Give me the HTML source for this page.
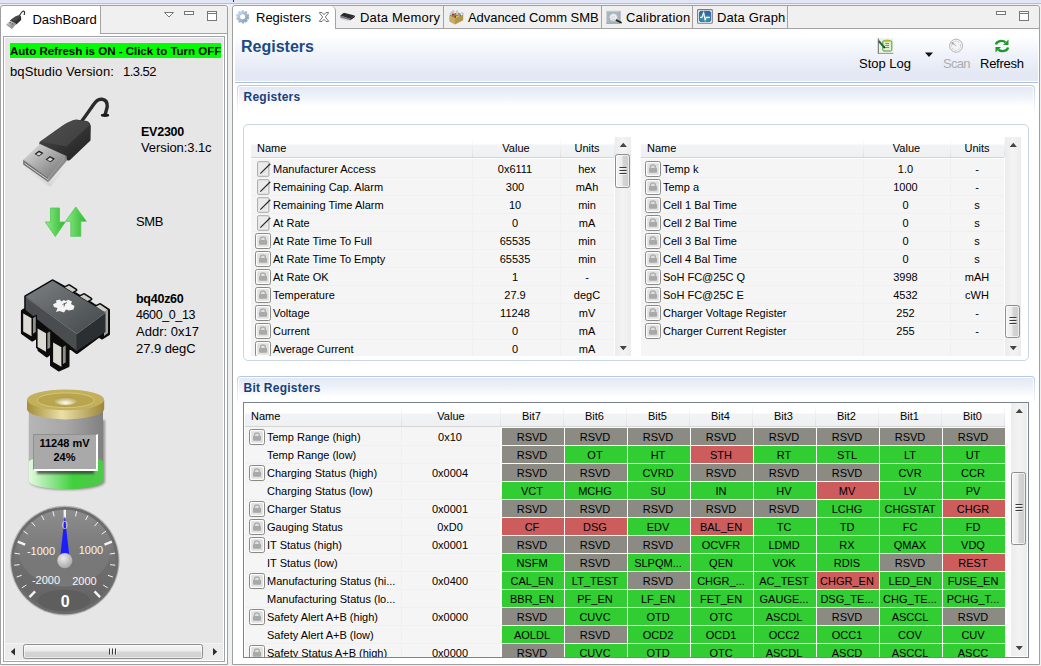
<!DOCTYPE html>
<html><head><meta charset="utf-8"><title>bqStudio</title><style>
*{box-sizing:border-box;margin:0;padding:0}
html,body{width:1041px;height:666px;overflow:hidden}
body{position:relative;background:#f0f0f0;font-family:"Liberation Sans",sans-serif;font-size:12px;color:#000}
.abs{position:absolute}
.t13{font-size:13px;white-space:nowrap}
.t12{font-size:11px;white-space:nowrap}
.cell{position:absolute;height:17px;width:62px;padding-right:2px;text-align:center;font-size:11px;line-height:18px;white-space:nowrap;overflow:hidden}
.row{position:absolute;white-space:nowrap;font-size:11px;line-height:18px;height:18px}
.ctr{position:absolute;text-align:center;white-space:nowrap;font-size:11px;line-height:18px;height:18px}
.lock{position:absolute;width:16px;height:16px}
</style></head><body>
<div class="abs" style="left:0;top:0;width:1041px;height:4px;background:linear-gradient(#dfe4f5 0,#e3e7f7 2.500px,#e3e7f7 3px,#b6bcd5 3px)"></div>
<div class="abs" style="left:0;top:664px;width:1041px;height:2px;background:#f0f0f0"></div>
<div class="abs" style="left:233px;top:0;width:1px;height:2px;background:#333"></div>
<div class="abs" style="left:0;top:5px;width:228px;height:660px;border:1px solid #a0a0a0;border-radius:3px 3px 0 0;background:#fff"></div>
<div class="abs" style="left:100px;top:6px;width:127px;height:28px;background:#f0f0f0;border-bottom:1px solid #a3a3a3;border-left:1px solid #a3a3a3;border-radius:0 4px 0 0"></div>
<div class="abs t13" style="left:32.500px;top:12px;line-height:16px;letter-spacing:-0.100px">DashBoard</div>
<svg class="abs" style="left:160px;top:8px" width="64" height="16" viewBox="0 0 64 16"><path d="M4.500 4.500h9l-4.500 4.500z" fill="#fff" stroke="#777"/><rect x="24.500" y="3.500" width="9" height="3" fill="#fff" stroke="#777"/><rect x="47.500" y="3.500" width="9" height="9" fill="#fff" stroke="#777"/><path d="M47.500 5.500h9" stroke="#777"/></svg>
<div class="abs" style="left:3px;top:36px;width:222px;height:626px;border:1px solid #a0a4ad;background:#fff"></div>
<div class="abs" style="left:5px;top:38px;width:218px;height:622px;background:#e6e6e6"></div>
<div class="abs" style="left:9px;top:42px;width:212px;height:16px;background:#f3e4f3"></div>
<div class="abs" style="left:10px;top:43px;width:211px;height:15px;background:#00ff00"></div>
<div class="abs" style="left:10px;top:43px;width:211px;height:15px;line-height:16px;font-size:11.5px;font-weight:bold;white-space:nowrap">Auto Refresh is ON - Click to Turn OFF</div>
<div class="abs" style="left:10px;top:64px;font-size:13px;line-height:16px;white-space:nowrap;letter-spacing:0.123px">bqStudio Version:</div>
<div class="abs" style="left:123px;top:64px;font-size:13px;line-height:16px;white-space:nowrap;letter-spacing:-0.524px">1.3.52</div>
<svg class="abs" style="left:0;top:0" width="228" height="640" viewBox="0 0 228 640"><defs>
<linearGradient id="ug" x1="0" y1="0" x2="1" y2="1"><stop offset="0" stop-color="#4e4e4e"/><stop offset="1" stop-color="#1e1e1e"/></linearGradient>
<linearGradient id="um" x1="0" y1="0" x2="1" y2="1"><stop offset="0" stop-color="#e4e4e4"/><stop offset="0.6" stop-color="#9c9c9c"/><stop offset="1" stop-color="#6e6e6e"/></linearGradient>
<linearGradient id="ag" x1="0" y1="0" x2="1" y2="0"><stop offset="0" stop-color="#8fea8a"/><stop offset="1" stop-color="#2cb82c"/></linearGradient>
<linearGradient id="cg" x1="0" y1="0" x2="1" y2="1"><stop offset="0" stop-color="#7c8083"/><stop offset="1" stop-color="#42474a"/></linearGradient>
<linearGradient id="bb" x1="0" y1="0" x2="1" y2="0"><stop offset="0" stop-color="#b6b6b6"/><stop offset="0.5" stop-color="#a7a7a7"/><stop offset="1" stop-color="#808080"/></linearGradient>
<linearGradient id="bg" x1="0" y1="0" x2="1" y2="0"><stop offset="0" stop-color="#e2fbe0"/><stop offset="0.6" stop-color="#40d03c"/><stop offset="1" stop-color="#50c84c"/></linearGradient>
<linearGradient id="bt" x1="0" y1="0" x2="1" y2="0"><stop offset="0" stop-color="#a48c38"/><stop offset="0.45" stop-color="#ece0a8"/><stop offset="1" stop-color="#9c863a"/></linearGradient>
<radialGradient id="bn" cx="0.5" cy="0.75" r="0.6"><stop offset="0" stop-color="#fffff4"/><stop offset="1" stop-color="#b4a04c"/></radialGradient>
<filter id="sh" x="-10%" y="-10%" width="130%" height="130%"><feGaussianBlur stdDeviation="1.2"/></filter>
<linearGradient id="gf" x1="0" y1="0" x2="0" y2="1"><stop offset="0" stop-color="#8e8e8e"/><stop offset="0.550" stop-color="#6e6e6e"/><stop offset="1" stop-color="#626262"/></linearGradient><linearGradient id="gh" x1="0" y1="0" x2="0" y2="1"><stop offset="0" stop-color="#8c8c8c" stop-opacity="0"/><stop offset="0.600" stop-color="#7c7c7c" stop-opacity="0.600"/><stop offset="1" stop-color="#7a7a7a" stop-opacity="0.900"/></linearGradient><radialGradient id="gk" cx="0.4" cy="0.35" r="0.7"><stop offset="0" stop-color="#ececec"/><stop offset="1" stop-color="#a4a4a4"/></radialGradient>
</defs><path d="M24 166L50 184L70 160L62 170L50 186Z" fill="#555" opacity="0.250" filter="url(#sh)"/><g transform="translate(10 90)"><path d="M71 32C75 27 79 21 82.500 16S88 8.800 92 9.300S97.500 12.500 97.200 17L95.300 24" fill="none" stroke="#2a2a2a" stroke-width="3.400" stroke-linecap="round"/><ellipse cx="95" cy="25.200" rx="4.200" ry="1.700" fill="#1a1a1a"/><path d="M29.500 52L52 36Q60 30.500 66 29.500L77 31Q81 32.500 80.800 38L80.500 50.500L60 70Q57.500 71.500 55.500 69L30.500 56.500Q28.500 54.500 29.500 52Z" fill="url(#ug)"/><path d="M30 51.500L52 36Q60 30.500 66 30L77 31.500Q80 32.500 79 35.500L56.500 56.500Z" fill="#505050" opacity="0.600"/><path d="M13.200 69.700L30 54L56.500 66L38.500 87.700Z" fill="url(#um)"/><path d="M13.200 69.700L38.500 87.700V92.300L13.200 74.500Z" fill="#707070"/><path d="M38.500 87.700L56.500 66L57 70.500L38.500 92.300Z" fill="#8c8c8c"/><path d="M14.500 73.200L38 89.800" stroke="#e0e0e0" stroke-width="0.900"/><path d="M24.500 64L29 60.500L33.500 63L29 66.500ZM35.500 69.500L40 66L45 68.800L40.500 72.300Z" fill="#262626"/><path d="M26.300 64.200L29 62.200L31.500 63.600L29 65.500ZM37.300 69.700L40 67.600L42.800 69.200L40.300 71.200Z" fill="#d8d8d8"/></g><g transform="translate(3.800 9.100) scale(0.215)"><path d="M71 32C75 27 79 21 82.500 16S88 8.800 92 9.300S97.500 12.500 97.200 17L95.300 24" fill="none" stroke="#2a2a2a" stroke-width="5" stroke-linecap="round"/><ellipse cx="95" cy="25.200" rx="4.200" ry="1.700" fill="#1a1a1a"/><path d="M29.500 52L52 36Q60 30.500 66 29.500L77 31Q81 32.500 80.800 38L80.500 50.500L60 70Q57.500 71.500 55.500 69L30.500 56.500Q28.500 54.500 29.500 52Z" fill="url(#ug)"/><path d="M30 51.500L52 36Q60 30.500 66 30L77 31.500Q80 32.500 79 35.500L56.500 56.500Z" fill="#505050" opacity="0.600"/><path d="M13.200 69.700L30 54L56.500 66L38.500 87.700Z" fill="url(#um)"/><path d="M13.200 69.700L38.500 87.700V92.300L13.200 74.500Z" fill="#707070"/><path d="M38.500 87.700L56.500 66L57 70.500L38.500 92.300Z" fill="#8c8c8c"/><path d="M14.500 73.200L38 89.800" stroke="#e0e0e0" stroke-width="0.900"/><path d="M24.500 64L29 60.500L33.500 63L29 66.500ZM35.500 69.500L40 66L45 68.800L40.500 72.300Z" fill="#262626"/><path d="M26.300 64.200L29 62.200L31.500 63.600L29 65.500ZM37.300 69.700L40 67.600L42.800 69.200L40.300 71.200Z" fill="#d8d8d8"/></g><path d="M50.500 208h9v14h5.800L55.300 236.500L45.300 222h5.200z" fill="url(#ag)" stroke="#52c852" stroke-width="0.800"/><path d="M70.800 236.300h10v-15h5.500L75.800 207L65.500 221.300h5.300z" fill="url(#ag)" stroke="#52c852" stroke-width="0.800"/><g transform="translate(10 270)" stroke-linejoin="round"><path d="M15.700 26.500L42.600 10.700L55 17.500L59 15.500L66 20L62.500 22L70 26.500L74 24.500L81 29L77.500 31L86 36.500L90 34.500L98.500 40V64L92 68L89 66L66.800 82.500L58 76V96L49 100L41.500 95V82L37 86L29 80V66L22.300 70L12.400 63V41L15.700 39Z" fill="#0c0c0c" stroke="#0c0c0c" stroke-width="3"/><path d="M55 17.500L59 15.500L66 20L62.500 22ZM70 26.500L74 24.500L81 29L77.500 31ZM86 36.500L90 34.500L98 40L94 42Z" fill="#cfcfc8"/><path d="M94 42L98 40V63L94 66Z" fill="#a4a49e"/><path d="M15.700 26.500L42.600 10.700L95.500 42.500L66.800 63.500Z" fill="url(#cg)"/><path d="M15.700 26.500L66.800 63.500V81L15.700 40Z" fill="#4a4d4f"/><path d="M66.800 63.500L95.500 42.500V62L66.800 81Z" fill="#2c2f31"/><path d="M16.500 27.500L66.800 63.800L95 43" fill="none" stroke="#8a8d8f" stroke-width="0.700"/><path d="M12.4 42.0l10 5.800v20.0l-10 -5.800z" fill="#dcdcd5" stroke="#0c0c0c" stroke-width="1.600"/><path d="M22.4 47.8l4 -2.500v17.0l-4 2.500z" fill="#8e8e88" stroke="#0c0c0c" stroke-width="1.200"/><path d="M26.8 57.0l10 5.800v20.5l-10 -5.800z" fill="#dcdcd5" stroke="#0c0c0c" stroke-width="1.600"/><path d="M36.8 62.8l4 -2.500v17.5l-4 2.500z" fill="#8e8e88" stroke="#0c0c0c" stroke-width="1.200"/><path d="M42.3 71.0l10 5.800v21.5l-10 -5.800z" fill="#dcdcd5" stroke="#0c0c0c" stroke-width="1.600"/><path d="M52.3 76.8l4 -2.500v18.5l-4 2.500z" fill="#8e8e88" stroke="#0c0c0c" stroke-width="1.200"/><path d="M43 34.500L46.500 32.500L46 30.500L50 29.500L51 31.500L54 30L55.500 31L58.500 29.800L62 31.500L61 34L64.500 36L63.500 39.500L59 40.500L56 39.500L54 42.500L49.500 41L46 42L47.500 38L44 37Z" fill="#f4f4f4"/><path d="M52.500 34.500L57 32.500M55 33l-1 3.500" stroke="#55585a" stroke-width="0.900"/></g><path d="M30 420V482a37 8 0 0 0 75 0V420z" fill="#444" opacity="0.500" filter="url(#sh)"/><path d="M28.800 410V481a37.100 8 0 0 0 74.200 0V410z" fill="url(#bb)"/><path d="M28.800 462a37.100 6.500 0 0 1 74.200 0V481a37.100 8 0 0 1 -74.200 0z" fill="url(#bg)"/><path d="M27 400v9a38.600 10.400 0 0 0 77.200 0v-9z" fill="url(#bt)"/><ellipse cx="65.600" cy="399.800" rx="38.600" ry="10.400" fill="#c2b05c"/><ellipse cx="65.600" cy="400.300" rx="28.500" ry="7.400" fill="#b8a54e" stroke="#d6c678" stroke-width="1"/><ellipse cx="65.600" cy="400.500" rx="11.500" ry="4.600" fill="url(#bn)"/><rect x="37" y="468" width="57" height="6" fill="#333" opacity="0.700" filter="url(#sh)"/><circle cx="64.8" cy="560.6" r="54.800" fill="#b4b4b4"/><circle cx="64.8" cy="560.6" r="53.700" fill="#6c6c6c"/><circle cx="64.8" cy="560.6" r="50.800" fill="url(#gf)"/><ellipse cx="64.500" cy="549.500" rx="46" ry="37" fill="url(#gh)"/><ellipse cx="64" cy="600.500" rx="26" ry="10.700" fill="#5e5e5e"/><line x1="29.5" y1="597.1" x2="35.1" y2="591.4" stroke="#f4f4f4" stroke-width="2.4"/><line x1="21.9" y1="587.8" x2="26.4" y2="585.0" stroke="#f4f4f4" stroke-width="1"/><line x1="16.7" y1="577.0" x2="21.7" y2="575.3" stroke="#f4f4f4" stroke-width="1"/><line x1="14.2" y1="565.2" x2="19.5" y2="564.7" stroke="#f4f4f4" stroke-width="1"/><line x1="14.5" y1="553.2" x2="19.8" y2="554.0" stroke="#f4f4f4" stroke-width="1"/><line x1="17.7" y1="541.6" x2="25.1" y2="544.6" stroke="#f4f4f4" stroke-width="2.4"/><line x1="23.5" y1="531.0" x2="27.8" y2="534.1" stroke="#f4f4f4" stroke-width="1"/><line x1="31.6" y1="522.1" x2="35.1" y2="526.2" stroke="#f4f4f4" stroke-width="1"/><line x1="41.6" y1="515.4" x2="44.0" y2="520.1" stroke="#f4f4f4" stroke-width="1"/><line x1="52.9" y1="511.2" x2="54.1" y2="516.4" stroke="#f4f4f4" stroke-width="1"/><line x1="64.8" y1="509.8" x2="64.8" y2="517.8" stroke="#f4f4f4" stroke-width="2.4"/><line x1="76.7" y1="511.2" x2="75.5" y2="516.4" stroke="#f4f4f4" stroke-width="1"/><line x1="88.0" y1="515.4" x2="85.6" y2="520.1" stroke="#f4f4f4" stroke-width="1"/><line x1="98.0" y1="522.1" x2="94.5" y2="526.2" stroke="#f4f4f4" stroke-width="1"/><line x1="106.1" y1="531.0" x2="101.8" y2="534.1" stroke="#f4f4f4" stroke-width="1"/><line x1="111.9" y1="541.6" x2="104.5" y2="544.6" stroke="#f4f4f4" stroke-width="2.4"/><line x1="115.1" y1="553.2" x2="109.8" y2="554.0" stroke="#f4f4f4" stroke-width="1"/><line x1="115.4" y1="565.2" x2="110.1" y2="564.7" stroke="#f4f4f4" stroke-width="1"/><line x1="112.9" y1="577.0" x2="107.9" y2="575.3" stroke="#f4f4f4" stroke-width="1"/><line x1="107.7" y1="587.8" x2="103.2" y2="585.0" stroke="#f4f4f4" stroke-width="1"/><line x1="100.1" y1="597.1" x2="94.5" y2="591.4" stroke="#f4f4f4" stroke-width="2.4"/><path d="M64.800 516L69.300 556h-9z" fill="#1c1cff"/><text x="64.800" y="528.500" font-family="Liberation Sans, sans-serif" font-size="11" fill="#d8d8e8" text-anchor="middle" opacity="0.850">0</text><circle cx="64.8" cy="560.6" r="7.600" fill="url(#gk)"/><text x="41" y="555" font-family="Liberation Sans, sans-serif" font-size="11" fill="#f6f6f6" text-anchor="middle">-1000</text><text x="91" y="554" font-family="Liberation Sans, sans-serif" font-size="11" fill="#f6f6f6" text-anchor="middle">1000</text><text x="46" y="584" font-family="Liberation Sans, sans-serif" font-size="11" fill="#f6f6f6" text-anchor="middle">-2000</text><text x="84.5" y="585" font-family="Liberation Sans, sans-serif" font-size="11" fill="#f6f6f6" text-anchor="middle">2000</text><text x="65.300" y="606.800" font-family="Liberation Sans, sans-serif" font-size="16" font-weight="bold" fill="#fff" text-anchor="middle">0</text></svg>
<div class="abs" style="left:141px;top:124px;font-size:12.5px;line-height:16px;white-space:nowrap;font-weight:bold;letter-spacing:-0.247px">EV2300</div>
<div class="abs" style="left:141px;top:140px;font-size:13px;line-height:16px;white-space:nowrap;letter-spacing:-0.087px">Version:3.1c</div>
<div class="abs" style="left:136px;top:214px;font-size:13px;line-height:16px;white-space:nowrap;letter-spacing:-0.390px">SMB</div>
<div class="abs" style="left:136px;top:291px;font-size:12.5px;line-height:16px;white-space:nowrap;font-weight:bold;letter-spacing:-0.261px">bq40z60</div>
<div class="abs" style="left:136px;top:307px;font-size:12.5px;line-height:16px;white-space:nowrap;letter-spacing:-0.396px">4600_0_13</div>
<div class="abs" style="left:136px;top:324px;font-size:13px;line-height:16px;white-space:nowrap;letter-spacing:0.013px">Addr: 0x17</div>
<div class="abs" style="left:136px;top:341px;font-size:13px;line-height:16px;white-space:nowrap;letter-spacing:-0.055px">27.9 degC</div>
<div class="abs" style="left:33px;top:434px;width:65px;height:37px;background:#a9a9a9;border-right:2px solid #fff;border-bottom:2px solid #fff;border-top:1px solid #909090;border-left:1px solid #909090"></div>
<div class="abs" style="left:33px;top:436px;width:63px;text-align:center;font-size:11px;font-weight:bold;line-height:14px;white-space:nowrap">11248 mV<br>24%</div>
<div class="abs" style="left:5px;top:643px;width:218px;height:17px;background:#ebebeb;border-top:1px solid #f4f4f4"></div>
<div class="abs" style="left:23px;top:644px;width:180px;height:15px;border:1px solid #8e8e8e;border-radius:2.500px;background:linear-gradient(#f5f5f5 0%,#ececec 45%,#d6d6d6 55%,#cecece 100%);box-shadow:inset 0 0 0 1px rgba(255,255,255,0.600)"></div>
<svg class="abs" style="left:4px;top:643px" width="220" height="18" viewBox="0 0 220 18"><path d="M11 5v7.500l-4.200-3.750z" fill="#2c2c2c"/><path d="M209 5v7.500l4.200-3.750z" fill="#2c2c2c"/><path d="M105.500 5.500v6M108.500 5.500v6M111.500 5.500v6" stroke="#3a3a3a" stroke-width="1"/><path d="M106.500 5.500v6M109.500 5.500v6M112.500 5.500v6" stroke="#fafafa" stroke-width="1" opacity="0.700"/></svg>
<div class="abs" style="left:232px;top:5px;width:808px;height:660px;border:1px solid #a0a0a0;border-radius:3px 3px 0 0;background:#fff"></div>
<div class="abs" style="left:233px;top:6px;width:806px;height:23px;background:#f0f0f0;border-bottom:1px solid #a3a3a3;border-radius:4px 4px 0 0"></div>
<div class="abs" style="left:233px;top:6px;width:103px;height:23px;background:#fff;border-right:1px solid #a3a3a3;border-radius:4px 5px 0 0"></div>
<div class="abs" style="left:443px;top:6px;width:1px;height:23px;background:#a3a3a3"></div>
<div class="abs" style="left:601px;top:6px;width:1px;height:23px;background:#a3a3a3"></div>
<div class="abs" style="left:692px;top:6px;width:1px;height:23px;background:#a3a3a3"></div>
<div class="abs" style="left:787px;top:6px;width:1px;height:23px;background:#a3a3a3"></div>
<div class="abs t13" style="left:256px;top:10px;line-height:16px;letter-spacing:0.00px">Registers</div>
<div class="abs t13" style="left:360px;top:10px;line-height:16px;letter-spacing:0.20px">Data Memory</div>
<div class="abs t13" style="left:468px;top:10px;line-height:16px;letter-spacing:-0.05px">Advanced Comm SMB</div>
<div class="abs t13" style="left:626px;top:10px;line-height:16px;letter-spacing:0.20px">Calibration</div>
<div class="abs t13" style="left:717px;top:10px;line-height:16px;letter-spacing:0.12px">Data Graph</div>
<svg class="abs" style="left:235px;top:9px" width="16" height="16" viewBox="0 0 16 16"><defs><linearGradient id="gr" x1="0" y1="0" x2="1" y2="1"><stop offset="0" stop-color="#c4d4e4"/><stop offset="1" stop-color="#8aa2ba"/></linearGradient></defs><circle cx="7.600" cy="7.800" r="5.300" fill="none" stroke="url(#gr)" stroke-width="2.600" stroke-dasharray="2.200 1.130"/><circle cx="7.600" cy="7.800" r="4" fill="none" stroke="url(#gr)" stroke-width="3"/></svg>
<svg class="abs" style="left:318px;top:11px" width="12" height="12" viewBox="0 0 12 12"><path d="M1.500 1.500h2.500l2 2.200 2-2.200h2.500v0.500l-3.200 4 3.200 4v0.500h-2.500l-2-2.200-2 2.200h-2.500v-0.500l3.200-4-3.200-4z" fill="#fff" stroke="#666" stroke-width="0.900"/></svg>
<svg class="abs" style="left:338px;top:9px" width="18" height="16" viewBox="0 0 18 16"><path d="M2.300 8.300L11.200 11.400V12.600L2.300 10Z" fill="#cfd3d9"/><path d="M2.300 6.600L12.200 9.700V11.300L2.300 8.500Z" fill="#70757e"/><path d="M16.600 6.400L16.900 8L12.300 11.300L12.200 9.700Z" fill="#1a1a1a"/><path d="M5.900 3.800L16.600 6.400L12.200 9.700L2.300 6.600Z" fill="#2b2b2b"/></svg>
<svg class="abs" style="left:447px;top:9px" width="18" height="17" viewBox="0 0 18 17"><path d="M2.300 6.600L10 3.200L16.200 5.500L8 9.500Z" fill="#9c8240"/><path d="M3.200 5.600L7 1.600" stroke="#bcc8dc" stroke-width="2.600"/><path d="M10 1.200L10.300 6" stroke="#c4ccd8" stroke-width="2"/><path d="M11.500 8.200L16 4" stroke="#aab6cc" stroke-width="2.800"/><circle cx="14.600" cy="5.300" r="1" fill="#f4f6fa"/><circle cx="13.300" cy="6.300" r="0.700" fill="#55688a"/><circle cx="6" cy="5.500" r="1.100" fill="#c82828"/><path d="M7.600 7.600L9.200 7.900" stroke="#c02030" stroke-width="1.600"/><path d="M9.200 7.900L10.800 8" stroke="#f0d820" stroke-width="1.600"/><path d="M2.300 6.600L8 9.500V15.600L2.300 12.400Z" fill="#c6ac62"/><path d="M8 9.500L16.200 5.500V11.200L8 15.600Z" fill="#b2964a"/></svg>
<svg class="abs" style="left:605px;top:9px" width="18" height="16" viewBox="0 0 18 16"><rect x="1.500" y="2.100" width="13.500" height="12.200" fill="#a9b5bd" stroke="#c9d3d9" stroke-width="0.800"/><path d="M1.500 14.300H15V2.100" fill="none" stroke="#8a969e" stroke-width="0.800"/><path d="M3 8.500l2-1.500 1.500 1.500" fill="none" stroke="#e8b0b0" stroke-width="0.700"/><circle cx="8.500" cy="8.400" r="3.700" fill="#eef2f6" stroke="#c4ced6" stroke-width="0.700"/><path d="M6.500 9.800l2-3 1.700 2.400" fill="none" stroke="#f0bcbc" stroke-width="0.900"/><path d="M7 10.800h3" stroke="#a8c4dc" stroke-width="0.900"/><path d="M11.500 11.200L16 13.500" stroke="#1e1e1e" stroke-width="1.700" stroke-linecap="round"/></svg>
<svg class="abs" style="left:696px;top:8px" width="18" height="17" viewBox="0 0 18 17"><defs><linearGradient id="dg" x1="0" y1="0" x2="0" y2="1"><stop offset="0" stop-color="#2c62a8"/><stop offset="1" stop-color="#2f94c4"/></linearGradient></defs><rect x="1.600" y="1.600" width="14.700" height="13.600" rx="0.800" fill="#fff" stroke="#7c7c74" stroke-width="1.100"/><rect x="3.400" y="3.300" width="11.300" height="10.300" rx="1.600" fill="url(#dg)" stroke="#164a94" stroke-width="0.700"/><path d="M4.100 9.400H6L7.600 4.600L9.200 11.900L10 9.400H13.800" fill="none" stroke="#e8ec9a" stroke-width="1.700" opacity="0.550"/><path d="M4.100 9.400H6L7.600 4.600L9.200 11.900L10 9.400H13.800" fill="none" stroke="#ffffff" stroke-width="0.900"/></svg>
<svg class="abs" style="left:990px;top:8px" width="44" height="16" viewBox="0 0 44 16"><rect x="6.500" y="3.500" width="9" height="3" fill="#fff" stroke="#777"/><rect x="29.500" y="3.500" width="9" height="9" fill="#fff" stroke="#777"/><path d="M29.500 5.500h9" stroke="#777"/></svg>
<div class="abs" style="left:235px;top:29px;width:803px;height:52px;background:linear-gradient(#ffffff 0%,#ffffff 12%,#f1f4fa 45%,#e3e8f4 85%,#e3e8f4 100%)"></div>
<div class="abs" style="left:235px;top:82px;width:803px;height:1px;background:#a9bedb"></div>
<div class="abs" style="left:241px;top:37px;font-size:16px;font-weight:bold;color:#1c4a86;line-height:20px;white-space:nowrap">Registers</div>
<div class="abs t13" style="left:859px;top:56px;line-height:16px">Stop Log</div>
<div class="abs t13" style="left:943px;top:56px;line-height:16px;color:#adadad;letter-spacing:-0.700px">Scan</div>
<div class="abs t13" style="left:980px;top:56px;line-height:16px;letter-spacing:-0.250px">Refresh</div>
<svg class="abs" style="left:877px;top:38px" width="17" height="17" viewBox="0 0 17 17"><rect x="1" y="0.300" width="15.300" height="15.500" fill="#edf1e2"/><path d="M1.300 0.300V15.800" stroke="#5c5c5c" stroke-width="0.900"/><path d="M1 15.400H16.300" stroke="#8c8c8c" stroke-width="0.900"/><rect x="5.800" y="2.800" width="9" height="10.200" rx="1.200" fill="#e2f1d0" stroke="#3f8f3f" stroke-width="0.900"/><path d="M8.300 5.500h3.800M8.300 7.500h3.800M8.300 9.500h3.800" stroke="#4fae4f" stroke-width="1.100"/><rect x="8" y="1.700" width="4" height="1.900" fill="#c4b41c"/><path d="M1.600 2.800L7.400 9.500" stroke="#1f6f2f" stroke-width="2"/><path d="M7 9l1 1.100" stroke="#1c1c1c" stroke-width="1.400"/></svg>
<svg class="abs" style="left:924px;top:52px" width="10" height="6" viewBox="0 0 10 6"><path d="M1 0.500h8l-4 4.500z" fill="#111"/></svg>
<svg class="abs" style="left:948px;top:38px" width="16" height="16" viewBox="0 0 16 16"><circle cx="8.100" cy="7.700" r="6.500" fill="#f4f4f4" stroke="#b4b4b4" stroke-width="1"/><circle cx="8.100" cy="7.700" r="4.500" fill="none" stroke="#bcbcbc" stroke-width="0.900" stroke-dasharray="1.800 1.400"/><circle cx="4.700" cy="5.300" r="1.200" fill="#a8a8a8"/><path d="M4.700 5.300L8.100 7.700" stroke="#b0b0b0" stroke-width="1"/></svg>
<svg class="abs" style="left:994px;top:39px" width="16" height="14" viewBox="0 0 16 14"><path d="M2 5.500a5.500 4 0 0 1 9.500-2.300" fill="none" stroke="#1f9a2a" stroke-width="2.400"/><path d="M14.500 0.500v5.500h-5.500z" fill="#1f9a2a"/><path d="M14 8.500a5.500 4 0 0 1-9.500 2.300" fill="none" stroke="#1f9a2a" stroke-width="2.400"/><path d="M1.500 13.500v-5.500h5.500z" fill="#1f9a2a"/></svg>
<div class="abs" style="left:237px;top:85px;width:798px;height:32px;border-radius:4px 4px 0 0;background:linear-gradient(#b4c8e2,#d9e2ef 12px,#ffffff 30px)"></div>
<div class="abs" style="left:238px;top:86px;width:796px;height:31px;border-radius:3px 3px 0 0;background:#fff"></div>
<div class="abs" style="left:239px;top:87px;width:794px;height:30px;border-radius:2px 2px 0 0;background:linear-gradient(#e2e8f4 0px,#f1f4fa 11px,#ffffff 19px)"></div>
<div class="abs" style="left:243.500px;top:89px;font-size:12px;font-weight:bold;color:#173f7c;line-height:16px;white-space:nowrap;letter-spacing:0.250px">Registers</div>
<div class="abs" style="left:243px;top:124px;width:786px;height:237px;border:1px solid #c9d6e4;border-radius:5px;background:#fff"></div>
<div class="abs" style="left:251px;top:138px;width:363px;height:20px;background:linear-gradient(#ffffff 0,#ffffff 6px,#f2f3f5 7px,#eff0f2 100%);border-bottom:1px solid #d5d5d5"></div>
<div class="abs" style="left:472px;top:138px;width:1px;height:19px;background:linear-gradient(#fff,#dedfe1)"></div>
<div class="abs" style="left:560px;top:138px;width:1px;height:19px;background:linear-gradient(#fff,#dedfe1)"></div>
<div class="abs" style="left:614px;top:138px;width:1px;height:19px;background:linear-gradient(#fff,#dedfe1)"></div>
<div class="abs t12" style="left:257px;top:140px;line-height:16px">Name</div>
<div class="ctr" style="left:472px;top:140px;width:88px;line-height:16px">Value</div>
<div class="ctr" style="left:560px;top:140px;width:54px;line-height:16px">Units</div>
<div class="abs" style="left:251px;top:159px;width:363px;height:197px;background:#f5f5f5;overflow:hidden">
<div class="abs" style="left:221px;top:0;width:1px;height:197px;background:#f0f0f0"></div>
<div class="abs" style="left:309px;top:0;width:1px;height:197px;background:#f0f0f0"></div>
<div class="abs" style="left:0;top:18px;width:363px;height:1px;background:#f0f0f0"></div>
<svg class="lock" style="left:5px;top:2px" viewBox="0 0 16 16"><rect x="1.600" y="0.700" width="11.300" height="14.600" rx="0.900" fill="#ebebeb" stroke="#a0a0a0" stroke-width="0.900"/><path d="M4.300 12.600L14.300 2.700" stroke="#2e2e2e" stroke-width="1.250"/><path d="M7.500 11.200l2-0.700" stroke="#c8c8c8" stroke-width="0.800"/></svg>
<div class="row" style="left:22px;top:1px">Manufacturer Access</div>
<div class="ctr" style="left:220px;top:1px;width:88px">0x6111</div>
<div class="ctr" style="left:309px;top:1px;width:54px">hex</div>
<div class="abs" style="left:0;top:36px;width:363px;height:1px;background:#f0f0f0"></div>
<svg class="lock" style="left:5px;top:20px" viewBox="0 0 16 16"><rect x="1.600" y="0.700" width="11.300" height="14.600" rx="0.900" fill="#ebebeb" stroke="#a0a0a0" stroke-width="0.900"/><path d="M4.300 12.600L14.300 2.700" stroke="#2e2e2e" stroke-width="1.250"/><path d="M7.500 11.200l2-0.700" stroke="#c8c8c8" stroke-width="0.800"/></svg>
<div class="row" style="left:22px;top:19px">Remaining Cap. Alarm</div>
<div class="ctr" style="left:220px;top:19px;width:88px">300</div>
<div class="ctr" style="left:309px;top:19px;width:54px">mAh</div>
<div class="abs" style="left:0;top:54px;width:363px;height:1px;background:#f0f0f0"></div>
<svg class="lock" style="left:5px;top:38px" viewBox="0 0 16 16"><rect x="1.600" y="0.700" width="11.300" height="14.600" rx="0.900" fill="#ebebeb" stroke="#a0a0a0" stroke-width="0.900"/><path d="M4.300 12.600L14.300 2.700" stroke="#2e2e2e" stroke-width="1.250"/><path d="M7.500 11.200l2-0.700" stroke="#c8c8c8" stroke-width="0.800"/></svg>
<div class="row" style="left:22px;top:37px">Remaining Time Alarm</div>
<div class="ctr" style="left:220px;top:37px;width:88px">10</div>
<div class="ctr" style="left:309px;top:37px;width:54px">min</div>
<div class="abs" style="left:0;top:72px;width:363px;height:1px;background:#f0f0f0"></div>
<svg class="lock" style="left:5px;top:56px" viewBox="0 0 16 16"><rect x="1.600" y="0.700" width="11.300" height="14.600" rx="0.900" fill="#ebebeb" stroke="#a0a0a0" stroke-width="0.900"/><path d="M4.300 12.600L14.300 2.700" stroke="#2e2e2e" stroke-width="1.250"/><path d="M7.500 11.200l2-0.700" stroke="#c8c8c8" stroke-width="0.800"/></svg>
<div class="row" style="left:22px;top:55px">At Rate</div>
<div class="ctr" style="left:220px;top:55px;width:88px">0</div>
<div class="ctr" style="left:309px;top:55px;width:54px">mA</div>
<div class="abs" style="left:0;top:90px;width:363px;height:1px;background:#f0f0f0"></div>
<svg class="lock" style="left:4px;top:74px" viewBox="0 0 16 16"><rect x="0.5" y="0.5" width="15" height="15" rx="1.800" fill="#fdfdfd" stroke="#8a8a84"/><rect x="2.200" y="2.200" width="11.700" height="11.500" fill="#e0e0e0"/><path d="M5.400 7.500V6.200a2.500 2.200 0 0 1 5 0V7.500" fill="none" stroke="#b0b0b0" stroke-width="1.500"/><rect x="4" y="6.900" width="8.100" height="4.900" rx="1" fill="#a9a9a9"/></svg>
<div class="row" style="left:22px;top:73px">At Rate Time To Full</div>
<div class="ctr" style="left:220px;top:73px;width:88px">65535</div>
<div class="ctr" style="left:309px;top:73px;width:54px">min</div>
<div class="abs" style="left:0;top:108px;width:363px;height:1px;background:#f0f0f0"></div>
<svg class="lock" style="left:4px;top:92px" viewBox="0 0 16 16"><rect x="0.5" y="0.5" width="15" height="15" rx="1.800" fill="#fdfdfd" stroke="#8a8a84"/><rect x="2.200" y="2.200" width="11.700" height="11.500" fill="#e0e0e0"/><path d="M5.400 7.500V6.200a2.500 2.200 0 0 1 5 0V7.500" fill="none" stroke="#b0b0b0" stroke-width="1.500"/><rect x="4" y="6.900" width="8.100" height="4.900" rx="1" fill="#a9a9a9"/></svg>
<div class="row" style="left:22px;top:91px">At Rate Time To Empty</div>
<div class="ctr" style="left:220px;top:91px;width:88px">65535</div>
<div class="ctr" style="left:309px;top:91px;width:54px">min</div>
<div class="abs" style="left:0;top:126px;width:363px;height:1px;background:#f0f0f0"></div>
<svg class="lock" style="left:4px;top:110px" viewBox="0 0 16 16"><rect x="0.5" y="0.5" width="15" height="15" rx="1.800" fill="#fdfdfd" stroke="#8a8a84"/><rect x="2.200" y="2.200" width="11.700" height="11.500" fill="#e0e0e0"/><path d="M5.400 7.500V6.200a2.500 2.200 0 0 1 5 0V7.500" fill="none" stroke="#b0b0b0" stroke-width="1.500"/><rect x="4" y="6.900" width="8.100" height="4.900" rx="1" fill="#a9a9a9"/></svg>
<div class="row" style="left:22px;top:109px">At Rate OK</div>
<div class="ctr" style="left:220px;top:109px;width:88px">1</div>
<div class="ctr" style="left:309px;top:109px;width:54px">-</div>
<div class="abs" style="left:0;top:144px;width:363px;height:1px;background:#f0f0f0"></div>
<svg class="lock" style="left:4px;top:128px" viewBox="0 0 16 16"><rect x="0.5" y="0.5" width="15" height="15" rx="1.800" fill="#fdfdfd" stroke="#8a8a84"/><rect x="2.200" y="2.200" width="11.700" height="11.500" fill="#e0e0e0"/><path d="M5.400 7.500V6.200a2.500 2.200 0 0 1 5 0V7.500" fill="none" stroke="#b0b0b0" stroke-width="1.500"/><rect x="4" y="6.900" width="8.100" height="4.900" rx="1" fill="#a9a9a9"/></svg>
<div class="row" style="left:22px;top:127px">Temperature</div>
<div class="ctr" style="left:220px;top:127px;width:88px">27.9</div>
<div class="ctr" style="left:309px;top:127px;width:54px">degC</div>
<div class="abs" style="left:0;top:162px;width:363px;height:1px;background:#f0f0f0"></div>
<svg class="lock" style="left:4px;top:146px" viewBox="0 0 16 16"><rect x="0.5" y="0.5" width="15" height="15" rx="1.800" fill="#fdfdfd" stroke="#8a8a84"/><rect x="2.200" y="2.200" width="11.700" height="11.500" fill="#e0e0e0"/><path d="M5.400 7.500V6.200a2.500 2.200 0 0 1 5 0V7.500" fill="none" stroke="#b0b0b0" stroke-width="1.500"/><rect x="4" y="6.900" width="8.100" height="4.900" rx="1" fill="#a9a9a9"/></svg>
<div class="row" style="left:22px;top:145px">Voltage</div>
<div class="ctr" style="left:220px;top:145px;width:88px">11248</div>
<div class="ctr" style="left:309px;top:145px;width:54px">mV</div>
<div class="abs" style="left:0;top:180px;width:363px;height:1px;background:#f0f0f0"></div>
<svg class="lock" style="left:4px;top:164px" viewBox="0 0 16 16"><rect x="0.5" y="0.5" width="15" height="15" rx="1.800" fill="#fdfdfd" stroke="#8a8a84"/><rect x="2.200" y="2.200" width="11.700" height="11.500" fill="#e0e0e0"/><path d="M5.400 7.500V6.200a2.500 2.200 0 0 1 5 0V7.500" fill="none" stroke="#b0b0b0" stroke-width="1.500"/><rect x="4" y="6.900" width="8.100" height="4.900" rx="1" fill="#a9a9a9"/></svg>
<div class="row" style="left:22px;top:163px">Current</div>
<div class="ctr" style="left:220px;top:163px;width:88px">0</div>
<div class="ctr" style="left:309px;top:163px;width:54px">mA</div>
<div class="abs" style="left:0;top:198px;width:363px;height:1px;background:#f0f0f0"></div>
<svg class="lock" style="left:4px;top:182px" viewBox="0 0 16 16"><rect x="0.5" y="0.5" width="15" height="15" rx="1.800" fill="#fdfdfd" stroke="#8a8a84"/><rect x="2.200" y="2.200" width="11.700" height="11.500" fill="#e0e0e0"/><path d="M5.400 7.500V6.200a2.500 2.200 0 0 1 5 0V7.500" fill="none" stroke="#b0b0b0" stroke-width="1.500"/><rect x="4" y="6.900" width="8.100" height="4.900" rx="1" fill="#a9a9a9"/></svg>
<div class="row" style="left:22px;top:181px">Average Current</div>
<div class="ctr" style="left:220px;top:181px;width:88px">0</div>
<div class="ctr" style="left:309px;top:181px;width:54px">mA</div>
</div>
<div class="abs" style="left:641px;top:138px;width:363px;height:20px;background:linear-gradient(#ffffff 0,#ffffff 6px,#f2f3f5 7px,#eff0f2 100%);border-bottom:1px solid #d5d5d5"></div>
<div class="abs" style="left:863px;top:138px;width:1px;height:19px;background:linear-gradient(#fff,#dedfe1)"></div>
<div class="abs" style="left:950px;top:138px;width:1px;height:19px;background:linear-gradient(#fff,#dedfe1)"></div>
<div class="abs" style="left:1004px;top:138px;width:1px;height:19px;background:linear-gradient(#fff,#dedfe1)"></div>
<div class="abs t12" style="left:647px;top:140px;line-height:16px">Name</div>
<div class="ctr" style="left:863px;top:140px;width:87px;line-height:16px">Value</div>
<div class="ctr" style="left:950px;top:140px;width:54px;line-height:16px">Units</div>
<div class="abs" style="left:641px;top:159px;width:363px;height:197px;background:#f5f5f5;overflow:hidden">
<div class="abs" style="left:222px;top:0;width:1px;height:197px;background:#f0f0f0"></div>
<div class="abs" style="left:309px;top:0;width:1px;height:197px;background:#f0f0f0"></div>
<div class="abs" style="left:0;top:18px;width:363px;height:1px;background:#f0f0f0"></div>
<svg class="lock" style="left:4px;top:2px" viewBox="0 0 16 16"><rect x="0.5" y="0.5" width="15" height="15" rx="1.800" fill="#fdfdfd" stroke="#8a8a84"/><rect x="2.200" y="2.200" width="11.700" height="11.500" fill="#e0e0e0"/><path d="M5.400 7.500V6.200a2.500 2.200 0 0 1 5 0V7.500" fill="none" stroke="#b0b0b0" stroke-width="1.500"/><rect x="4" y="6.900" width="8.100" height="4.900" rx="1" fill="#a9a9a9"/></svg>
<div class="row" style="left:22px;top:1px">Temp k</div>
<div class="ctr" style="left:221px;top:1px;width:87px">1.0</div>
<div class="ctr" style="left:309px;top:1px;width:54px">-</div>
<div class="abs" style="left:0;top:36px;width:363px;height:1px;background:#f0f0f0"></div>
<svg class="lock" style="left:4px;top:20px" viewBox="0 0 16 16"><rect x="0.5" y="0.5" width="15" height="15" rx="1.800" fill="#fdfdfd" stroke="#8a8a84"/><rect x="2.200" y="2.200" width="11.700" height="11.500" fill="#e0e0e0"/><path d="M5.400 7.500V6.200a2.500 2.200 0 0 1 5 0V7.500" fill="none" stroke="#b0b0b0" stroke-width="1.500"/><rect x="4" y="6.900" width="8.100" height="4.900" rx="1" fill="#a9a9a9"/></svg>
<div class="row" style="left:22px;top:19px">Temp a</div>
<div class="ctr" style="left:221px;top:19px;width:87px">1000</div>
<div class="ctr" style="left:309px;top:19px;width:54px">-</div>
<div class="abs" style="left:0;top:54px;width:363px;height:1px;background:#f0f0f0"></div>
<svg class="lock" style="left:4px;top:38px" viewBox="0 0 16 16"><rect x="0.5" y="0.5" width="15" height="15" rx="1.800" fill="#fdfdfd" stroke="#8a8a84"/><rect x="2.200" y="2.200" width="11.700" height="11.500" fill="#e0e0e0"/><path d="M5.400 7.500V6.200a2.500 2.200 0 0 1 5 0V7.500" fill="none" stroke="#b0b0b0" stroke-width="1.500"/><rect x="4" y="6.900" width="8.100" height="4.900" rx="1" fill="#a9a9a9"/></svg>
<div class="row" style="left:22px;top:37px">Cell 1 Bal Time</div>
<div class="ctr" style="left:221px;top:37px;width:87px">0</div>
<div class="ctr" style="left:309px;top:37px;width:54px">s</div>
<div class="abs" style="left:0;top:72px;width:363px;height:1px;background:#f0f0f0"></div>
<svg class="lock" style="left:4px;top:56px" viewBox="0 0 16 16"><rect x="0.5" y="0.5" width="15" height="15" rx="1.800" fill="#fdfdfd" stroke="#8a8a84"/><rect x="2.200" y="2.200" width="11.700" height="11.500" fill="#e0e0e0"/><path d="M5.400 7.500V6.200a2.500 2.200 0 0 1 5 0V7.500" fill="none" stroke="#b0b0b0" stroke-width="1.500"/><rect x="4" y="6.900" width="8.100" height="4.900" rx="1" fill="#a9a9a9"/></svg>
<div class="row" style="left:22px;top:55px">Cell 2 Bal Time</div>
<div class="ctr" style="left:221px;top:55px;width:87px">0</div>
<div class="ctr" style="left:309px;top:55px;width:54px">s</div>
<div class="abs" style="left:0;top:90px;width:363px;height:1px;background:#f0f0f0"></div>
<svg class="lock" style="left:4px;top:74px" viewBox="0 0 16 16"><rect x="0.5" y="0.5" width="15" height="15" rx="1.800" fill="#fdfdfd" stroke="#8a8a84"/><rect x="2.200" y="2.200" width="11.700" height="11.500" fill="#e0e0e0"/><path d="M5.400 7.500V6.200a2.500 2.200 0 0 1 5 0V7.500" fill="none" stroke="#b0b0b0" stroke-width="1.500"/><rect x="4" y="6.900" width="8.100" height="4.900" rx="1" fill="#a9a9a9"/></svg>
<div class="row" style="left:22px;top:73px">Cell 3 Bal Time</div>
<div class="ctr" style="left:221px;top:73px;width:87px">0</div>
<div class="ctr" style="left:309px;top:73px;width:54px">s</div>
<div class="abs" style="left:0;top:108px;width:363px;height:1px;background:#f0f0f0"></div>
<svg class="lock" style="left:4px;top:92px" viewBox="0 0 16 16"><rect x="0.5" y="0.5" width="15" height="15" rx="1.800" fill="#fdfdfd" stroke="#8a8a84"/><rect x="2.200" y="2.200" width="11.700" height="11.500" fill="#e0e0e0"/><path d="M5.400 7.500V6.200a2.500 2.200 0 0 1 5 0V7.500" fill="none" stroke="#b0b0b0" stroke-width="1.500"/><rect x="4" y="6.900" width="8.100" height="4.900" rx="1" fill="#a9a9a9"/></svg>
<div class="row" style="left:22px;top:91px">Cell 4 Bal Time</div>
<div class="ctr" style="left:221px;top:91px;width:87px">0</div>
<div class="ctr" style="left:309px;top:91px;width:54px">s</div>
<div class="abs" style="left:0;top:126px;width:363px;height:1px;background:#f0f0f0"></div>
<svg class="lock" style="left:4px;top:110px" viewBox="0 0 16 16"><rect x="0.5" y="0.5" width="15" height="15" rx="1.800" fill="#fdfdfd" stroke="#8a8a84"/><rect x="2.200" y="2.200" width="11.700" height="11.500" fill="#e0e0e0"/><path d="M5.400 7.500V6.200a2.500 2.200 0 0 1 5 0V7.500" fill="none" stroke="#b0b0b0" stroke-width="1.500"/><rect x="4" y="6.900" width="8.100" height="4.900" rx="1" fill="#a9a9a9"/></svg>
<div class="row" style="left:22px;top:109px">SoH FC@25C Q</div>
<div class="ctr" style="left:221px;top:109px;width:87px">3998</div>
<div class="ctr" style="left:309px;top:109px;width:54px">mAH</div>
<div class="abs" style="left:0;top:144px;width:363px;height:1px;background:#f0f0f0"></div>
<svg class="lock" style="left:4px;top:128px" viewBox="0 0 16 16"><rect x="0.5" y="0.5" width="15" height="15" rx="1.800" fill="#fdfdfd" stroke="#8a8a84"/><rect x="2.200" y="2.200" width="11.700" height="11.500" fill="#e0e0e0"/><path d="M5.400 7.500V6.200a2.500 2.200 0 0 1 5 0V7.500" fill="none" stroke="#b0b0b0" stroke-width="1.500"/><rect x="4" y="6.900" width="8.100" height="4.900" rx="1" fill="#a9a9a9"/></svg>
<div class="row" style="left:22px;top:127px">SoH FC@25C E</div>
<div class="ctr" style="left:221px;top:127px;width:87px">4532</div>
<div class="ctr" style="left:309px;top:127px;width:54px">cWH</div>
<div class="abs" style="left:0;top:162px;width:363px;height:1px;background:#f0f0f0"></div>
<svg class="lock" style="left:4px;top:146px" viewBox="0 0 16 16"><rect x="0.5" y="0.5" width="15" height="15" rx="1.800" fill="#fdfdfd" stroke="#8a8a84"/><rect x="2.200" y="2.200" width="11.700" height="11.500" fill="#e0e0e0"/><path d="M5.400 7.500V6.200a2.500 2.200 0 0 1 5 0V7.500" fill="none" stroke="#b0b0b0" stroke-width="1.500"/><rect x="4" y="6.900" width="8.100" height="4.900" rx="1" fill="#a9a9a9"/></svg>
<div class="row" style="left:22px;top:145px">Charger Voltage Register</div>
<div class="ctr" style="left:221px;top:145px;width:87px">252</div>
<div class="ctr" style="left:309px;top:145px;width:54px">-</div>
<div class="abs" style="left:0;top:180px;width:363px;height:1px;background:#f0f0f0"></div>
<svg class="lock" style="left:4px;top:164px" viewBox="0 0 16 16"><rect x="0.5" y="0.5" width="15" height="15" rx="1.800" fill="#fdfdfd" stroke="#8a8a84"/><rect x="2.200" y="2.200" width="11.700" height="11.500" fill="#e0e0e0"/><path d="M5.400 7.500V6.200a2.500 2.200 0 0 1 5 0V7.500" fill="none" stroke="#b0b0b0" stroke-width="1.500"/><rect x="4" y="6.900" width="8.100" height="4.900" rx="1" fill="#a9a9a9"/></svg>
<div class="row" style="left:22px;top:163px">Charger Current Register</div>
<div class="ctr" style="left:221px;top:163px;width:87px">255</div>
<div class="ctr" style="left:309px;top:163px;width:54px">-</div>
<div class="abs" style="left:0;top:198px;width:363px;height:1px;background:#f0f0f0"></div>
<div class="row" style="left:22px;top:181px"></div>
<div class="ctr" style="left:221px;top:181px;width:87px"></div>
<div class="ctr" style="left:309px;top:181px;width:54px"></div>
</div>
<div class="abs" style="left:615px;top:137px;width:16px;height:219px;background:linear-gradient(90deg,#ececec,#f3f3f3 50%,#ececec)"></div>
<div class="abs" style="left:615px;top:154px;width:15px;height:34px;border:1px solid #8e8e8e;border-radius:2.500px;background:linear-gradient(90deg,#f5f5f5 0%,#ececec 45%,#d4d4d4 55%,#cdcdcd 100%);box-shadow:inset 0 0 0 1px rgba(255,255,255,0.6)"></div>
<svg class="abs" style="left:615px;top:137px" width="16" height="219" viewBox="0 0 16 219"><path d="M4.700 10h7.200l-3.600-4.200z" fill="#444"/><path d="M4.700 209h7.200l-3.600 4.200z" fill="#444"/><path d="M4.500 30.5h7M4.500 33.5h7M4.500 36.5h7" stroke="#3a3a3a"/><path d="M4.500 31.5h7M4.500 34.5h7M4.500 37.5h7" stroke="#fafafa" opacity="0.700"/></svg>
<div class="abs" style="left:1005px;top:137px;width:16px;height:219px;background:linear-gradient(90deg,#ececec,#f3f3f3 50%,#ececec)"></div>
<div class="abs" style="left:1005px;top:305px;width:15px;height:33px;border:1px solid #8e8e8e;border-radius:2.500px;background:linear-gradient(90deg,#f5f5f5 0%,#ececec 45%,#d4d4d4 55%,#cdcdcd 100%);box-shadow:inset 0 0 0 1px rgba(255,255,255,0.6)"></div>
<svg class="abs" style="left:1005px;top:137px" width="16" height="219" viewBox="0 0 16 219"><path d="M4.700 10h7.200l-3.600-4.200z" fill="#444"/><path d="M4.700 209h7.200l-3.600 4.200z" fill="#444"/><path d="M4.500 180.5h7M4.500 183.5h7M4.500 186.5h7" stroke="#3a3a3a"/><path d="M4.500 181.5h7M4.500 184.5h7M4.500 187.5h7" stroke="#fafafa" opacity="0.700"/></svg>
<div class="abs" style="left:237px;top:376px;width:798px;height:26px;border-radius:4px 4px 0 0;background:linear-gradient(#b4c8e2,#d9e2ef 12px,#ffffff 30px)"></div>
<div class="abs" style="left:238px;top:377px;width:796px;height:25px;border-radius:3px 3px 0 0;background:#fff"></div>
<div class="abs" style="left:239px;top:378px;width:794px;height:24px;border-radius:2px 2px 0 0;background:linear-gradient(#e2e8f4 0px,#f1f4fa 11px,#ffffff 19px)"></div>
<div class="abs" style="left:243.500px;top:380px;font-size:12px;font-weight:bold;color:#173f7c;line-height:16px;white-space:nowrap;letter-spacing:0.250px">Bit Registers</div>
<div class="abs" style="left:243px;top:402px;width:786px;height:256px;border:1px solid #7b8391;background:#fff"></div>
<div class="abs" style="left:245px;top:403px;width:760px;height:24px;background:linear-gradient(#ffffff 0,#ffffff 10px,#f2f3f5 11px,#eff0f2 100%);border-bottom:1px solid #d5d5d5"></div>
<div class="abs" style="left:401px;top:404px;width:1px;height:22px;background:linear-gradient(#fff,#dedfe1)"></div>
<div class="abs" style="left:500px;top:404px;width:1px;height:22px;background:linear-gradient(#fff,#dedfe1)"></div>
<div class="abs" style="left:563px;top:404px;width:1px;height:22px;background:linear-gradient(#fff,#dedfe1)"></div>
<div class="abs" style="left:626px;top:404px;width:1px;height:22px;background:linear-gradient(#fff,#dedfe1)"></div>
<div class="abs" style="left:689px;top:404px;width:1px;height:22px;background:linear-gradient(#fff,#dedfe1)"></div>
<div class="abs" style="left:752px;top:404px;width:1px;height:22px;background:linear-gradient(#fff,#dedfe1)"></div>
<div class="abs" style="left:815px;top:404px;width:1px;height:22px;background:linear-gradient(#fff,#dedfe1)"></div>
<div class="abs" style="left:878px;top:404px;width:1px;height:22px;background:linear-gradient(#fff,#dedfe1)"></div>
<div class="abs" style="left:941px;top:404px;width:1px;height:22px;background:linear-gradient(#fff,#dedfe1)"></div>
<div class="abs" style="left:1004px;top:404px;width:1px;height:22px;background:linear-gradient(#fff,#dedfe1)"></div>
<div class="abs t12" style="left:251px;top:408px;line-height:16px">Name</div>
<div class="ctr" style="left:402px;top:408px;width:98px;line-height:16px">Value</div>
<div class="ctr" style="left:500px;top:408px;width:63px;line-height:16px">Bit7</div>
<div class="ctr" style="left:563px;top:408px;width:63px;line-height:16px">Bit6</div>
<div class="ctr" style="left:626px;top:408px;width:63px;line-height:16px">Bit5</div>
<div class="ctr" style="left:689px;top:408px;width:63px;line-height:16px">Bit4</div>
<div class="ctr" style="left:752px;top:408px;width:63px;line-height:16px">Bit3</div>
<div class="ctr" style="left:815px;top:408px;width:63px;line-height:16px">Bit2</div>
<div class="ctr" style="left:878px;top:408px;width:63px;line-height:16px">Bit1</div>
<div class="ctr" style="left:941px;top:408px;width:63px;line-height:16px">Bit0</div>
<div class="abs" style="left:245px;top:427px;width:765px;height:230px;background:#f5f5f5;overflow:hidden">
<div class="abs" style="left:156px;top:0;width:1px;height:230px;background:#f0f0f0"></div>
<div class="abs" style="left:255px;top:0;width:765px;height:230px;background:#fbfbfb"></div>
<div class="abs" style="left:0;top:18px;width:255px;height:1px;background:#f0f0f0"></div>
<svg class="lock" style="left:4px;top:2px" viewBox="0 0 16 16"><rect x="0.5" y="0.5" width="15" height="15" rx="1.800" fill="#fdfdfd" stroke="#8a8a84"/><rect x="2.200" y="2.200" width="11.700" height="11.500" fill="#e0e0e0"/><path d="M5.400 7.500V6.200a2.500 2.200 0 0 1 5 0V7.500" fill="none" stroke="#b0b0b0" stroke-width="1.500"/><rect x="4" y="6.900" width="8.100" height="4.900" rx="1" fill="#a9a9a9"/></svg>
<div class="row" style="left:22px;top:1px">Temp Range (high)</div>
<div class="ctr" style="left:156px;top:1px;width:98px">0x10</div>
<div class="cell" style="left:257px;top:1px;background:#8b8a83">RSVD</div>
<div class="cell" style="left:320px;top:1px;background:#8b8a83">RSVD</div>
<div class="cell" style="left:383px;top:1px;background:#8b8a83">RSVD</div>
<div class="cell" style="left:446px;top:1px;background:#8b8a83">RSVD</div>
<div class="cell" style="left:509px;top:1px;background:#8b8a83">RSVD</div>
<div class="cell" style="left:572px;top:1px;background:#8b8a83">RSVD</div>
<div class="cell" style="left:635px;top:1px;background:#8b8a83">RSVD</div>
<div class="cell" style="left:698px;top:1px;background:#8b8a83">RSVD</div>
<div class="abs" style="left:0;top:36px;width:255px;height:1px;background:#f0f0f0"></div>
<div class="row" style="left:22px;top:19px">Temp Range (low)</div>
<div class="cell" style="left:257px;top:19px;background:#8b8a83">RSVD</div>
<div class="cell" style="left:320px;top:19px;background:#32cd32">OT</div>
<div class="cell" style="left:383px;top:19px;background:#32cd32">HT</div>
<div class="cell" style="left:446px;top:19px;background:#cd5c5c">STH</div>
<div class="cell" style="left:509px;top:19px;background:#32cd32">RT</div>
<div class="cell" style="left:572px;top:19px;background:#32cd32">STL</div>
<div class="cell" style="left:635px;top:19px;background:#32cd32">LT</div>
<div class="cell" style="left:698px;top:19px;background:#32cd32">UT</div>
<div class="abs" style="left:0;top:54px;width:255px;height:1px;background:#f0f0f0"></div>
<svg class="lock" style="left:4px;top:38px" viewBox="0 0 16 16"><rect x="0.5" y="0.5" width="15" height="15" rx="1.800" fill="#fdfdfd" stroke="#8a8a84"/><rect x="2.200" y="2.200" width="11.700" height="11.500" fill="#e0e0e0"/><path d="M5.400 7.500V6.200a2.500 2.200 0 0 1 5 0V7.500" fill="none" stroke="#b0b0b0" stroke-width="1.500"/><rect x="4" y="6.900" width="8.100" height="4.900" rx="1" fill="#a9a9a9"/></svg>
<div class="row" style="left:22px;top:37px">Charging Status (high)</div>
<div class="ctr" style="left:156px;top:37px;width:98px">0x0004</div>
<div class="cell" style="left:257px;top:37px;background:#8b8a83">RSVD</div>
<div class="cell" style="left:320px;top:37px;background:#8b8a83">RSVD</div>
<div class="cell" style="left:383px;top:37px;background:#32cd32">CVRD</div>
<div class="cell" style="left:446px;top:37px;background:#8b8a83">RSVD</div>
<div class="cell" style="left:509px;top:37px;background:#8b8a83">RSVD</div>
<div class="cell" style="left:572px;top:37px;background:#8b8a83">RSVD</div>
<div class="cell" style="left:635px;top:37px;background:#32cd32">CVR</div>
<div class="cell" style="left:698px;top:37px;background:#32cd32">CCR</div>
<div class="abs" style="left:0;top:72px;width:255px;height:1px;background:#f0f0f0"></div>
<div class="row" style="left:22px;top:55px">Charging Status (low)</div>
<div class="cell" style="left:257px;top:55px;background:#32cd32">VCT</div>
<div class="cell" style="left:320px;top:55px;background:#32cd32">MCHG</div>
<div class="cell" style="left:383px;top:55px;background:#32cd32">SU</div>
<div class="cell" style="left:446px;top:55px;background:#32cd32">IN</div>
<div class="cell" style="left:509px;top:55px;background:#32cd32">HV</div>
<div class="cell" style="left:572px;top:55px;background:#cd5c5c">MV</div>
<div class="cell" style="left:635px;top:55px;background:#32cd32">LV</div>
<div class="cell" style="left:698px;top:55px;background:#32cd32">PV</div>
<div class="abs" style="left:0;top:90px;width:255px;height:1px;background:#f0f0f0"></div>
<svg class="lock" style="left:4px;top:74px" viewBox="0 0 16 16"><rect x="0.5" y="0.5" width="15" height="15" rx="1.800" fill="#fdfdfd" stroke="#8a8a84"/><rect x="2.200" y="2.200" width="11.700" height="11.500" fill="#e0e0e0"/><path d="M5.400 7.500V6.200a2.500 2.200 0 0 1 5 0V7.500" fill="none" stroke="#b0b0b0" stroke-width="1.500"/><rect x="4" y="6.900" width="8.100" height="4.900" rx="1" fill="#a9a9a9"/></svg>
<div class="row" style="left:22px;top:73px">Charger Status</div>
<div class="ctr" style="left:156px;top:73px;width:98px">0x0001</div>
<div class="cell" style="left:257px;top:73px;background:#8b8a83">RSVD</div>
<div class="cell" style="left:320px;top:73px;background:#8b8a83">RSVD</div>
<div class="cell" style="left:383px;top:73px;background:#8b8a83">RSVD</div>
<div class="cell" style="left:446px;top:73px;background:#8b8a83">RSVD</div>
<div class="cell" style="left:509px;top:73px;background:#8b8a83">RSVD</div>
<div class="cell" style="left:572px;top:73px;background:#32cd32">LCHG</div>
<div class="cell" style="left:635px;top:73px;background:#32cd32">CHGSTAT</div>
<div class="cell" style="left:698px;top:73px;background:#cd5c5c">CHGR</div>
<div class="abs" style="left:0;top:108px;width:255px;height:1px;background:#f0f0f0"></div>
<svg class="lock" style="left:4px;top:92px" viewBox="0 0 16 16"><rect x="0.5" y="0.5" width="15" height="15" rx="1.800" fill="#fdfdfd" stroke="#8a8a84"/><rect x="2.200" y="2.200" width="11.700" height="11.500" fill="#e0e0e0"/><path d="M5.400 7.500V6.200a2.500 2.200 0 0 1 5 0V7.500" fill="none" stroke="#b0b0b0" stroke-width="1.500"/><rect x="4" y="6.900" width="8.100" height="4.900" rx="1" fill="#a9a9a9"/></svg>
<div class="row" style="left:22px;top:91px">Gauging Status</div>
<div class="ctr" style="left:156px;top:91px;width:98px">0xD0</div>
<div class="cell" style="left:257px;top:91px;background:#cd5c5c">CF</div>
<div class="cell" style="left:320px;top:91px;background:#cd5c5c">DSG</div>
<div class="cell" style="left:383px;top:91px;background:#32cd32">EDV</div>
<div class="cell" style="left:446px;top:91px;background:#cd5c5c">BAL_EN</div>
<div class="cell" style="left:509px;top:91px;background:#32cd32">TC</div>
<div class="cell" style="left:572px;top:91px;background:#32cd32">TD</div>
<div class="cell" style="left:635px;top:91px;background:#32cd32">FC</div>
<div class="cell" style="left:698px;top:91px;background:#32cd32">FD</div>
<div class="abs" style="left:0;top:126px;width:255px;height:1px;background:#f0f0f0"></div>
<svg class="lock" style="left:4px;top:110px" viewBox="0 0 16 16"><rect x="0.5" y="0.5" width="15" height="15" rx="1.800" fill="#fdfdfd" stroke="#8a8a84"/><rect x="2.200" y="2.200" width="11.700" height="11.500" fill="#e0e0e0"/><path d="M5.400 7.500V6.200a2.500 2.200 0 0 1 5 0V7.500" fill="none" stroke="#b0b0b0" stroke-width="1.500"/><rect x="4" y="6.900" width="8.100" height="4.900" rx="1" fill="#a9a9a9"/></svg>
<div class="row" style="left:22px;top:109px">IT Status (high)</div>
<div class="ctr" style="left:156px;top:109px;width:98px">0x0001</div>
<div class="cell" style="left:257px;top:109px;background:#8b8a83">RSVD</div>
<div class="cell" style="left:320px;top:109px;background:#8b8a83">RSVD</div>
<div class="cell" style="left:383px;top:109px;background:#8b8a83">RSVD</div>
<div class="cell" style="left:446px;top:109px;background:#32cd32">OCVFR</div>
<div class="cell" style="left:509px;top:109px;background:#32cd32">LDMD</div>
<div class="cell" style="left:572px;top:109px;background:#32cd32">RX</div>
<div class="cell" style="left:635px;top:109px;background:#32cd32">QMAX</div>
<div class="cell" style="left:698px;top:109px;background:#32cd32">VDQ</div>
<div class="abs" style="left:0;top:144px;width:255px;height:1px;background:#f0f0f0"></div>
<div class="row" style="left:22px;top:127px">IT Status (low)</div>
<div class="cell" style="left:257px;top:127px;background:#32cd32">NSFM</div>
<div class="cell" style="left:320px;top:127px;background:#8b8a83">RSVD</div>
<div class="cell" style="left:383px;top:127px;background:#32cd32">SLPQM...</div>
<div class="cell" style="left:446px;top:127px;background:#32cd32">QEN</div>
<div class="cell" style="left:509px;top:127px;background:#32cd32">VOK</div>
<div class="cell" style="left:572px;top:127px;background:#32cd32">RDIS</div>
<div class="cell" style="left:635px;top:127px;background:#8b8a83">RSVD</div>
<div class="cell" style="left:698px;top:127px;background:#cd5c5c">REST</div>
<div class="abs" style="left:0;top:162px;width:255px;height:1px;background:#f0f0f0"></div>
<svg class="lock" style="left:4px;top:146px" viewBox="0 0 16 16"><rect x="0.5" y="0.5" width="15" height="15" rx="1.800" fill="#fdfdfd" stroke="#8a8a84"/><rect x="2.200" y="2.200" width="11.700" height="11.500" fill="#e0e0e0"/><path d="M5.400 7.500V6.200a2.500 2.200 0 0 1 5 0V7.500" fill="none" stroke="#b0b0b0" stroke-width="1.500"/><rect x="4" y="6.900" width="8.100" height="4.900" rx="1" fill="#a9a9a9"/></svg>
<div class="row" style="left:22px;top:145px">Manufacturing Status (hi...</div>
<div class="ctr" style="left:156px;top:145px;width:98px">0x0400</div>
<div class="cell" style="left:257px;top:145px;background:#32cd32">CAL_EN</div>
<div class="cell" style="left:320px;top:145px;background:#32cd32">LT_TEST</div>
<div class="cell" style="left:383px;top:145px;background:#8b8a83">RSVD</div>
<div class="cell" style="left:446px;top:145px;background:#32cd32">CHGR_...</div>
<div class="cell" style="left:509px;top:145px;background:#32cd32">AC_TEST</div>
<div class="cell" style="left:572px;top:145px;background:#cd5c5c">CHGR_EN</div>
<div class="cell" style="left:635px;top:145px;background:#32cd32">LED_EN</div>
<div class="cell" style="left:698px;top:145px;background:#32cd32">FUSE_EN</div>
<div class="abs" style="left:0;top:180px;width:255px;height:1px;background:#f0f0f0"></div>
<div class="row" style="left:22px;top:163px">Manufacturing Status (lo...</div>
<div class="cell" style="left:257px;top:163px;background:#32cd32">BBR_EN</div>
<div class="cell" style="left:320px;top:163px;background:#32cd32">PF_EN</div>
<div class="cell" style="left:383px;top:163px;background:#32cd32">LF_EN</div>
<div class="cell" style="left:446px;top:163px;background:#32cd32">FET_EN</div>
<div class="cell" style="left:509px;top:163px;background:#32cd32">GAUGE...</div>
<div class="cell" style="left:572px;top:163px;background:#32cd32">DSG_TE...</div>
<div class="cell" style="left:635px;top:163px;background:#32cd32">CHG_TE...</div>
<div class="cell" style="left:698px;top:163px;background:#32cd32">PCHG_T...</div>
<div class="abs" style="left:0;top:198px;width:255px;height:1px;background:#f0f0f0"></div>
<svg class="lock" style="left:4px;top:182px" viewBox="0 0 16 16"><rect x="0.5" y="0.5" width="15" height="15" rx="1.800" fill="#fdfdfd" stroke="#8a8a84"/><rect x="2.200" y="2.200" width="11.700" height="11.500" fill="#e0e0e0"/><path d="M5.400 7.500V6.200a2.500 2.200 0 0 1 5 0V7.500" fill="none" stroke="#b0b0b0" stroke-width="1.500"/><rect x="4" y="6.900" width="8.100" height="4.900" rx="1" fill="#a9a9a9"/></svg>
<div class="row" style="left:22px;top:181px">Safety Alert A+B (high)</div>
<div class="ctr" style="left:156px;top:181px;width:98px">0x0000</div>
<div class="cell" style="left:257px;top:181px;background:#8b8a83">RSVD</div>
<div class="cell" style="left:320px;top:181px;background:#32cd32">CUVC</div>
<div class="cell" style="left:383px;top:181px;background:#32cd32">OTD</div>
<div class="cell" style="left:446px;top:181px;background:#32cd32">OTC</div>
<div class="cell" style="left:509px;top:181px;background:#32cd32">ASCDL</div>
<div class="cell" style="left:572px;top:181px;background:#8b8a83">RSVD</div>
<div class="cell" style="left:635px;top:181px;background:#32cd32">ASCCL</div>
<div class="cell" style="left:698px;top:181px;background:#8b8a83">RSVD</div>
<div class="abs" style="left:0;top:216px;width:255px;height:1px;background:#f0f0f0"></div>
<div class="row" style="left:22px;top:199px">Safety Alert A+B (low)</div>
<div class="cell" style="left:257px;top:199px;background:#32cd32">AOLDL</div>
<div class="cell" style="left:320px;top:199px;background:#8b8a83">RSVD</div>
<div class="cell" style="left:383px;top:199px;background:#32cd32">OCD2</div>
<div class="cell" style="left:446px;top:199px;background:#32cd32">OCD1</div>
<div class="cell" style="left:509px;top:199px;background:#32cd32">OCC2</div>
<div class="cell" style="left:572px;top:199px;background:#32cd32">OCC1</div>
<div class="cell" style="left:635px;top:199px;background:#32cd32">COV</div>
<div class="cell" style="left:698px;top:199px;background:#32cd32">CUV</div>
<div class="abs" style="left:0;top:234px;width:255px;height:1px;background:#f0f0f0"></div>
<svg class="lock" style="left:4px;top:218px" viewBox="0 0 16 16"><rect x="0.5" y="0.5" width="15" height="15" rx="1.800" fill="#fdfdfd" stroke="#8a8a84"/><rect x="2.200" y="2.200" width="11.700" height="11.500" fill="#e0e0e0"/><path d="M5.400 7.500V6.200a2.500 2.200 0 0 1 5 0V7.500" fill="none" stroke="#b0b0b0" stroke-width="1.500"/><rect x="4" y="6.900" width="8.100" height="4.900" rx="1" fill="#a9a9a9"/></svg>
<div class="row" style="left:22px;top:217px">Safety Status A+B (high)</div>
<div class="ctr" style="left:156px;top:217px;width:98px">0x0000</div>
<div class="cell" style="left:257px;top:217px;background:#8b8a83">RSVD</div>
<div class="cell" style="left:320px;top:217px;background:#32cd32">CUVC</div>
<div class="cell" style="left:383px;top:217px;background:#32cd32">OTD</div>
<div class="cell" style="left:446px;top:217px;background:#32cd32">OTC</div>
<div class="cell" style="left:509px;top:217px;background:#32cd32">ASCDL</div>
<div class="cell" style="left:572px;top:217px;background:#32cd32">ASCD</div>
<div class="cell" style="left:635px;top:217px;background:#32cd32">ASCCL</div>
<div class="cell" style="left:698px;top:217px;background:#32cd32">ASCC</div>
</div>
<div class="abs" style="left:1011px;top:403px;width:16px;height:253px;background:linear-gradient(90deg,#ececec,#f3f3f3 50%,#ececec)"></div>
<div class="abs" style="left:1011px;top:472px;width:15px;height:73px;border:1px solid #8e8e8e;border-radius:2.500px;background:linear-gradient(90deg,#f5f5f5 0%,#ececec 45%,#d4d4d4 55%,#cdcdcd 100%);box-shadow:inset 0 0 0 1px rgba(255,255,255,0.6)"></div>
<svg class="abs" style="left:1011px;top:403px" width="16" height="253" viewBox="0 0 16 253"><path d="M4.700 10h7.200l-3.600-4.200z" fill="#444"/><path d="M4.700 243h7.200l-3.600 4.200z" fill="#444"/><path d="M4.500 101.5h7M4.500 104.5h7M4.500 107.5h7" stroke="#3a3a3a"/><path d="M4.500 102.5h7M4.500 105.5h7M4.500 108.5h7" stroke="#fafafa" opacity="0.700"/></svg>
</body></html>
